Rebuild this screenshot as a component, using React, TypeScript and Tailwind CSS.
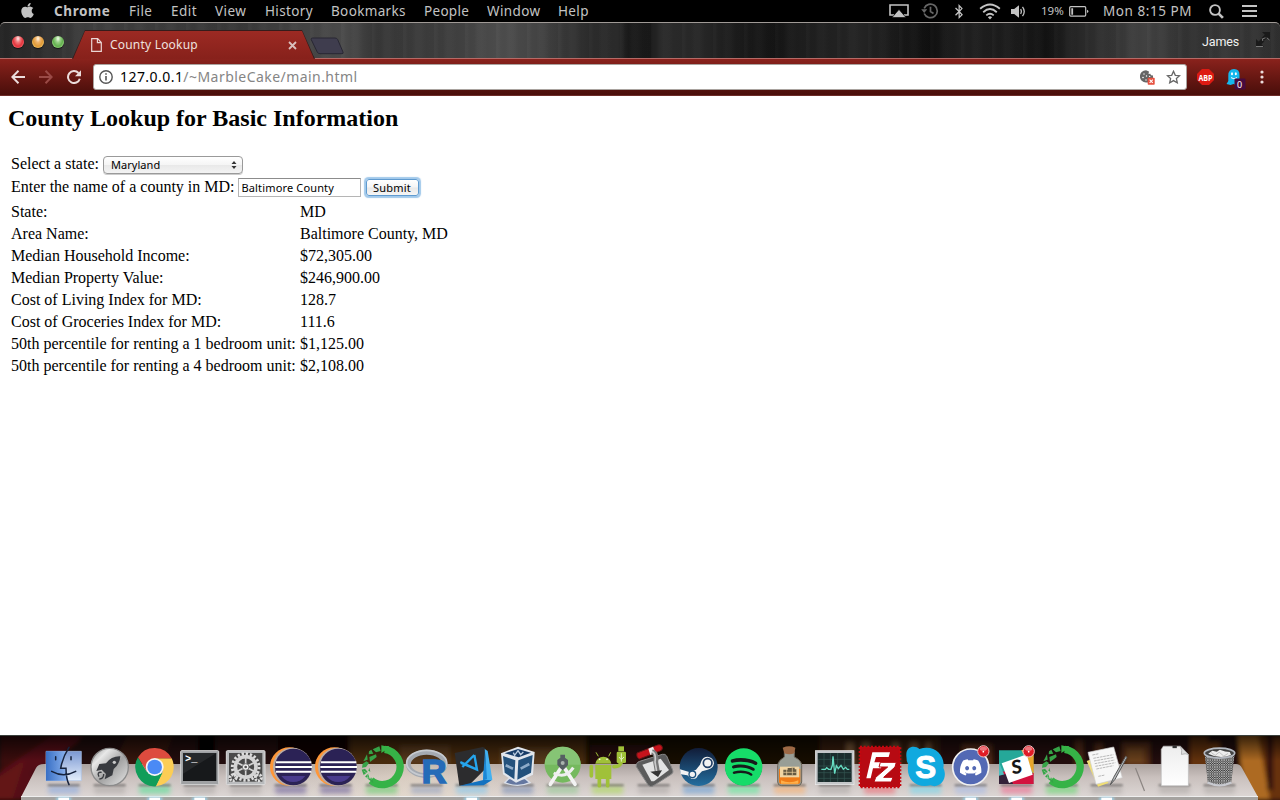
import type { ReactNode } from 'react';
import { FaApple, FaBluetoothB, FaSpotify } from 'react-icons/fa';
import { FaDiscord } from 'react-icons/fa6';

const ui = 'font-["Noto_Sans","Liberation_Sans",sans-serif]';

const menus: { label: string; cls: string }[] = [
  { label: 'Chrome', cls: 'w-[75px] font-bold tracking-[0.6px]' },
  { label: 'File', cls: 'w-[42px] tracking-[0.45px]' },
  { label: 'Edit', cls: 'w-[44px] tracking-[0.45px]' },
  { label: 'View', cls: 'w-[50px] tracking-[0.45px]' },
  { label: 'History', cls: 'w-[66px] tracking-[0.35px]' },
  { label: 'Bookmarks', cls: 'w-[93px] tracking-[0.35px]' },
  { label: 'People', cls: 'w-[63px] tracking-[0.3px]' },
  { label: 'Window', cls: 'w-[71px] tracking-[0.4px]' },
  { label: 'Help', cls: 'w-[40px] tracking-[0.35px]' },
];

function MenuBar() {
  return (
    <header className={`${ui} flex h-[22px] shrink-0 items-center bg-black text-[13.5px] leading-[22px] text-[#c3c3c3]`}>
      <FaApple className="ml-[19px] mb-[2px] mr-[18px] h-[17px] w-[17px] shrink-0" />
      <nav className="flex">
        {menus.map((m) => (
          <span key={m.label} className={`${m.cls} shrink-0 whitespace-nowrap`}>{m.label}</span>
        ))}
      </nav>
      <div className="ml-auto flex h-[22px] w-[391px] shrink-0 items-center">
        <svg className="w-[20px] h-[14px] shrink-0" viewBox="0 0 20 14" fill="none">
          <path d="M5 11H1V1h18v10h-4" stroke="#c3c3c3" strokeWidth="1.6" />
          <path d="M10 5.5 17 13.5H3Z" fill="#c3c3c3" stroke="#000" strokeWidth=".6" />
        </svg>
        <svg className="ml-[12px] w-[18px] h-[16px] shrink-0" viewBox="0 0 18 16" fill="none" stroke="#676767" strokeWidth="1.7">
          <path d="M3.2 10.5A6.8 6.8 0 1 0 3.2 5.3M9.5 3.8v4.7l3 2" />
          <path d="M.2 6.2h6L3.2 10Z" fill="#676767" stroke="none" />
        </svg>
        <FaBluetoothB className="ml-[15px] h-[15px] w-[10px] shrink-0" />
        <svg className="ml-[15px] w-[22px] h-[17px] shrink-0" viewBox="0 0 23 17" preserveAspectRatio="none" fill="none" stroke="#c3c3c3" strokeWidth="1.9">
          <path d="M1.2 5.8Q11.5-3 21.8 5.8M4.4 9.2Q11.5 3 18.6 9.2M7.6 12.4Q11.5 9 15.4 12.4" />
          <path d="m11.5 16.4-2.2-2.2q2.2-1.7 4.4 0Z" fill="#c3c3c3" stroke="none" />
        </svg>
        <svg className="ml-[10px] w-[15px] h-[13px] shrink-0" viewBox="0 0 15 13" fill="none" stroke="#c3c3c3" strokeWidth="1.3">
          <path d="M0 4h3.2L8 .3v12.4L3.2 9H0Z" fill="#c3c3c3" stroke="none" />
          <path d="M9.6 4.1q1.5 2.4 0 4.8M11.5 1.9q3.5 4.6 0 9.2" />
        </svg>
        <span className="ml-[15px] w-[28px] shrink-0 text-[11.5px]">19%</span>
        <svg className="w-[20px] h-[11px] shrink-0" viewBox="0 0 20 11" fill="none">
          <rect x=".7" y=".7" width="16" height="9.4" rx="1" stroke="#c3c3c3" strokeWidth="1.2" />
          <path d="M2.3 2.2h1.8v6.5H2.3ZM18 3.7q3 1.7 0 3.4Z" fill="#c3c3c3" />
        </svg>
        <span className="ml-[14px] w-[106px] shrink-0 whitespace-nowrap tracking-[0.55px]">Mon 8:15 PM</span>
        <svg className="w-[15px] h-[15px] shrink-0" viewBox="0 0 15 15" fill="none" stroke="#c3c3c3">
          <circle cx="6" cy="6" r="4.9" strokeWidth="1.9" />
          <path d="m9.6 9.6 4.3 4.3" strokeWidth="2.7" />
        </svg>
        <svg className="ml-[18px] w-[15px] h-[12px] shrink-0" viewBox="0 0 15 12" fill="#c3c3c3">
          <path d="M0 0h15v2H0ZM0 5h15v2H0ZM0 10h15v2H0Z" />
        </svg>
      </div>
    </header>
  );
}

function TabStrip() {
  return (
    <div className="flex h-[36px] shrink-0 rounded-t-[5px] border-t border-[#a09a96] bg-[repeating-linear-gradient(90deg,#ffffff04_0_2px,#00000008_5px_9px,#ffffff04_13px_17px,#00000008_23px_31px),linear-gradient(90deg,#252525_0,#303030_45px,#404040_90px,#393939_240px,#444_300px,#4c4c4c_345px,#383838_375px,#3f3f3f_450px,#4e4e4e_500px,#464646_535px,#2c2c2c_590px,#2b2b2b_618px,#1b1b1b_628px,#191919_651px,#2b2b2b_660px,#282828_700px,#1c1c1c_735px,#151515_775px,#1e1e1e_800px,#252525_860px,#191919_900px,#101010_930px,#202020_960px,#1b1b1b_1020px,#121212_1045px,#292929_1080px,#363636_1115px,#434343_1145px,#323232_1190px,#383838_1230px,#303030_1280px)]">
      <div className="ml-[12px] mt-[13px] flex gap-[8px]">
        <i className="h-[12px] w-[12px] rounded-full bg-[radial-gradient(ellipse_at_50%_22%,#fbd5d5_0_6%,#f07a7c_28%,#e4333b_58%,#ff9a9e_98%)] shadow-[0_1px_1px_#0009]" />
        <i className="h-[12px] w-[12px] rounded-full bg-[radial-gradient(ellipse_at_50%_22%,#fdebd0_0_6%,#f0b56e_28%,#e09a35_58%,#ffe99a_98%)] shadow-[0_1px_1px_#0009]" />
        <i className="h-[12px] w-[12px] rounded-full bg-[radial-gradient(ellipse_at_50%_22%,#e0f5d8_0_6%,#98cf86_28%,#62b04d_58%,#cdf9b2_98%)] shadow-[0_1px_1px_#0009]" />
      </div>
      <div className="ml-[8px] mt-[7px] h-[29px] w-[244px] shrink-0 bg-[#351c1b] [clip-path:polygon(0_100%,13px_0,230px_0,243px_100%)]">
        <div className={`${ui} mt-px ml-px flex h-[28px] w-[242px] items-center bg-linear-to-b from-[#9c2a23] to-[#87211b] text-[12px] text-[#efe1df] [clip-path:polygon(0_100%,12px_0,229px_0,241px_100%)]`}>
          <svg className="ml-[18px] w-[11px] h-[14px] shrink-0" viewBox="0 0 11 14" fill="none" stroke="#ead6d4" strokeWidth="1.2">
            <path d="M.7.7h6l3.6 3.8v8.8H.7ZM6.4.7v4h3.9" />
          </svg>
          <span className="ml-[8px] w-[178px] whitespace-nowrap tracking-[0.2px]">County Lookup</span>
          <svg className="w-[9px] h-[9px] shrink-0" viewBox="0 0 9 9" stroke="#d9bfbc" strokeWidth="1.8"><path d="m1 1 7 7M8 1 1 8" /></svg>
        </div>
      </div>
      <svg className="-ml-[6px] mt-[14px] w-[35px] h-[18px] shrink-0" viewBox="0 0 35 18">
        <path d="M2.5 1H25q2 0 2.7 1.6L33 15q.7 1.7-1 1.7H10q-2 0-2.7-1.6L1.2 2.5Q.8 1 2.5 1Z" fill="#3f3d4e" stroke="#282733" />
      </svg>
      <span className='ml-auto mt-[11px] w-[54px] font-["Roboto",sans-serif] text-[12.5px] leading-[16px] tracking-[-0.15px] text-[#f0f0f0]'>James</span>
      <svg className="mr-[10px] mt-[9px] w-[14px] h-[16px] shrink-0" viewBox="0 0 14 16" fill="none">
        <path d="M6 0h8v8l-2.500-2.600-3 3-2.700-2.700 3-3ZM0 15V7l2.600 2.500 2.800-2.800 2.800 2.800-2.800 2.800L8 15Z" fill="#1a1a1a" />
        <path d="M0 14.500h7M6.500 8.800v-2l3-1M10.800 5.800 13.500 8" stroke="#777" />
      </svg>
    </div>
  );
}

function Toolbar() {
  return (
    <div className={`${ui} flex h-[38px] shrink-0 items-start border-y border-t-[#b56a66] border-b-[#6e2c28] bg-linear-to-b from-[#8a221c] to-[#490e0a]`}>
      <svg className="ml-[11px] mt-[11px] w-[14px] h-[14px] shrink-0" viewBox="0 0 14 14" fill="none" stroke="#ecdddc" strokeWidth="2"><path d="M14 7H1.5M7.5.8 1.3 7l6.2 6.2" /></svg>
      <svg className="ml-[14px] mt-[11px] w-[14px] h-[14px] shrink-0" viewBox="0 0 14 14" fill="none" stroke="#9a4a46" strokeWidth="2"><path d="M0 7h12.5M6.5.8 12.7 7l-6.2 6.2" /></svg>
      <svg className="ml-[14px] mt-[11px] w-[14px] h-[14px] shrink-0" viewBox="0 0 14 14" fill="none" stroke="#ecdddc" strokeWidth="2"><path d="M12.8 8.7A6 6 0 1 1 11.5 3" /><path d="M14 .3v6H8Z" fill="#ecdddc" stroke="none" /></svg>
      <div className="ml-[12px] mt-[5px] flex h-[26px] w-[1094px] shrink-0 items-center rounded-[3px] border border-[#a9a39f] bg-white">
        <svg className="ml-[5px] w-[14px] h-[14px] shrink-0" viewBox="0 0 14 14" fill="none" stroke="#555"><circle cx="7" cy="7" r="6.2" strokeWidth="1.4" /><path d="M7 6v4.6M7 3.2v1.600" strokeWidth="1.6" /></svg>
        <span className="ml-[7px] whitespace-nowrap text-[14px] leading-[20px] tracking-[0.45px] text-[#858585]"><span className="text-black">127.0.0.1</span>/~MarbleCake/main.html</span>
        <svg className="ml-auto w-[15px] h-[15px] shrink-0" viewBox="0 0 15 15">
          <path d="M6 .3a6 6 0 0 0 0 12.200h2V8h5V5.500l-2-.2-.7-1.500-1.800.2L9 1.500Z" fill="#666" />
          <g fill="#fff"><circle cx="4" cy="4" r=".7" /><circle cx="3" cy="7.500" r=".8" /><circle cx="6" cy="10" r=".7" /><circle cx="6.500" cy="6" r=".7" /><circle cx="9.700" cy="6.400" r=".7" /></g>
          <rect x="7.700" y="7.700" width="7" height="7" rx=".7" fill="#e6503f" /><path d="m9.600 9.600 3.200 3.200m0-3.200-3.200 3.200" stroke="#fff" strokeWidth="1.1" />
        </svg>
        <svg className="ml-[11px] mr-[5px] w-[15px] h-[14px] shrink-0" viewBox="0 0 15 14" fill="none" stroke="#666" strokeWidth="1.3"><path d="m7.500 1.300 1.800 4 4.300.4-3.200 2.900.9 4.200-3.800-2.200-3.800 2.200.9-4.200L1.400 5.700l4.300-.4Z" /></svg>
      </div>
      <svg className="ml-[10px] mt-[10px] w-[17px] h-[16px] shrink-0" viewBox="0 0 17 16">
        <path d="M5 0h7l5 5v6l-5 5H5l-5-5V5Z" fill="#dd1a12" />
        <text x="8.500" y="11.500" textAnchor="middle" textLength="14" lengthAdjust="spacingAndGlyphs" fontFamily="Open Sans, sans-serif" fontSize="9" fontWeight="700" fill="#fff">ABP</text>
      </svg>
      <svg className="ml-[12px] mt-[10px] w-[20px] h-[21px] shrink-0" viewBox="0 0 20 21">
        <path d="M2.300 6.500Q2.300 0 8 0t5.500 6v5l1.500 4-3-1-2 2-2.500-1-3 1-4-1 1.800-3Z" fill="#15b8ee" />
        <ellipse cx="6" cy="4.800" rx="1" ry="1.500" fill="#fff" /><ellipse cx="9.800" cy="4.800" rx="1" ry="1.500" fill="#fff" /><path d="M5 8.600q3 2.500 6 0" stroke="#fff" fill="none" />
        <rect x="8.500" y="9.500" width="11" height="11" rx="1" fill="#470a3e" />
        <text x="13.500" y="18.500" textAnchor="middle" fontFamily="Noto Sans, sans-serif" fontSize="9" fill="#fff">0</text>
      </svg>
      <svg className="ml-[14px] mt-[11px] w-[4px] h-[14px] shrink-0" viewBox="0 0 4 14" fill="#ecdddc"><circle cx="2" cy="2" r="1.600" /><circle cx="2" cy="7" r="1.600" /><circle cx="2" cy="12" r="1.600" /></svg>
    </div>
  );
}

const rows = [
  ['State:', 'MD'],
  ['Area Name:', 'Baltimore County, MD'],
  ['Median Household Income:', '$72,305.00'],
  ['Median Property Value:', '$246,900.00'],
  ['Cost of Living Index for MD:', '128.7'],
  ['Cost of Groceries Index for MD:', '111.6'],
  ['50th percentile for renting a 1 bedroom unit:', '$1,125.00'],
  ['50th percentile for renting a 4 bedroom unit:', '$2,108.00'],
];

function Page() {
  return (
    <main className='min-h-0 flex-1 overflow-hidden bg-white font-["Liberation_Serif","Times_New_Roman",serif] text-[16px] leading-[18px] text-black'>
      <h2 className="ml-[8px] mt-[8px] text-[24px] leading-[28px] font-bold">County Lookup for Basic Information</h2>
      <div className="ml-[11px] mt-[21px] flex h-[22px] items-center">
        <span>Select a state:</span>
        <div className={`${ui} ml-[4px] mt-[2px] flex h-[18px] w-[140px] items-center rounded-[4px] border border-[#9a9a9a] bg-[linear-gradient(#fff,#f5f5f5_48%,#e9e9e9_52%,#f3f3f3)] pl-[7px] pr-[5px] text-[11px] tracking-[0.05px] shadow-[0_1px_0_#ccc]`}>
          <span>Maryland</span>
          <svg className="ml-auto w-[6px] h-[8px]" viewBox="0 0 6 8" fill="#333"><path d="M3 0 5.500 3h-5ZM3 8 .5 5h5Z" /></svg>
        </div>
      </div>
      <div className="ml-[11px] mt-[1px] flex h-[23px] items-center">
        <span className="mb-px">Enter the name of a county in MD:</span>
        <input className={`${ui} ml-[3px] h-[19px] w-[123px] border border-[#b5b5b5] border-t-[#8c8c8c] bg-white pl-[3px] pr-px text-[11px] tracking-[0.15px] outline-none`} defaultValue="Baltimore County" />
        <button className={`${ui} ml-[5px] h-[17px] w-[53px] rounded-[3px] border border-[#5f9bd0] bg-[linear-gradient(#fff,#f5f5f5_48%,#e9e9e9_52%,#f5f5f5)] text-[11px] leading-[15px] tracking-[0.2px] shadow-[0_0_1px_1.5px_#77afe0b0]`}>Submit</button>
      </div>
      <table className="ml-[8px] mt-[1px] border-separate border-spacing-[2px]">
        <tbody>
          {rows.map(([k, v]) => (
            <tr key={k}>
              <td className="w-[287px] whitespace-nowrap p-px">{k}</td>
              <td className="whitespace-nowrap p-px">{v}</td>
            </tr>
          ))}
        </tbody>
      </table>
    </main>
  );
}

/* Dock icons share one drawing grid: 3 units per pixel, centred on the icon. */
function DockItem({ children, running = false, glow = '#a9a4a2', doc = false }: { children: ReactNode; running?: boolean; glow?: string; doc?: boolean }) {
  return (
    <svg className={doc ? 'h-[65px] w-[45px] shrink-0 overflow-visible' : 'h-[65px] w-[45.35px] shrink-0 overflow-visible'} viewBox="-68 -96 136 195">
      <rect x="-46" y="58" width="92" height="22" fill={glow} opacity=".55" filter="url(#soft)" />
      <path d="M-48 52H48V58H-48Z" fill="#0006" filter="url(#softer)" />
      {children}
      {running && <><ellipse cx="0" cy="96" rx="24" ry="5" fill="#9ee0ff" filter="url(#softer)" /><rect x="-16" y="92" width="32" height="7" fill="#fff" /></>}
    </svg>
  );
}

function Eclipse() {
  return <><circle cx="-4" cy="-1" r="58" fill="#ff9638" /><circle cx="5" cy="0" r="58" fill="#b9aca6" /><circle cx="8" cy="0" r="55" fill="#2b2255" /><path d="M-28 27a45 45 0 0 0 72 0Z" fill="#493b8d" /><path d="M-44-14H62M-46 0H64M-44 14H62" stroke="#fff" strokeWidth="6" /></>;
}

function Ring() {
  return (
    <g transform="translate(3 0)">
      <path d="M6-53A53 53 0 1 1-35 40" fill="none" stroke="#36b347" strokeWidth="22" />
      <path d="m-4-65 10 2 14 0-10 12-14 9Z" fill="#36b347" />
      <g fill="#36a347">
        <path d="m-10-62 4 14-14 4-10-9ZM-34-52l6 12-14 2 1-9ZM-20-38l2 8-20 15-2-15ZM-47-38l2 16-13 5ZM-60-10l11-7 8 5-9 12-12 2ZM-63 8l10-3 8 10-12 9ZM-40 2l3 12-6-3ZM-53 29l10-10 3 14 8-1 4 16Z" />
      </g>
      <path d="m-54 30 22 6M-42 12l-6 34M-37 26l-20-14" stroke="#c7e2c4" strokeWidth="2" opacity=".7" />
    </g>
  );
}

function Badge({ x }: { x: number }) {
  return <><circle cx={x} cy="-47" r="17" fill="#e01c26" stroke="#ecc5c5" strokeWidth="3" /><ellipse cx={x} cy="-55" rx="11" ry="6" fill="#fff" opacity=".4" /><circle cx={x} cy="-46" r="2.500" fill="#fff" /></>;
}

/* Blurred theatre-like wallpaper behind the dock, with the glass shelf on top. */
function Shelf() {
  return (
    <svg className="absolute -top-px left-0 h-[65px] w-[1280px]" viewBox="0 735 1280 65">
      <defs>
        <linearGradient id="shelf" x2="0" y2="1"><stop stopColor="#aaa19e" /><stop offset=".4" stopColor="#c9c0bd" /><stop offset="1" stopColor="#ddd7d5" /></linearGradient>
        <linearGradient id="shade" x2="0" y2="1"><stop stopOpacity=".7" /><stop offset=".4" stopOpacity="0" /></linearGradient>
        <linearGradient id="warm" x2="1" y2="0"><stop offset=".2" stopColor="#e9dac5" stopOpacity="0" /><stop offset=".32" stopColor="#e9dac5" stopOpacity=".5" /><stop offset=".43" stopColor="#e9dac5" stopOpacity="0" /></linearGradient>
        <filter id="wall" x="-5%" y="-50%" width="110%" height="200%"><feGaussianBlur stdDeviation="2" /></filter>
        <filter id="soft" x="-30%" y="-80%" width="160%" height="260%"><feGaussianBlur stdDeviation="8" /></filter>
        <filter id="softer" x="-30%" y="-200%" width="160%" height="500%"><feGaussianBlur stdDeviation="3" /></filter>
      </defs>
      <g filter="url(#wall)">
        <path d="M0 730H110V800H0Z" fill="#3b0b0c" />
        <path d="M-5 775 60 730H100L20 800H-5Z" fill="#541113" /><path d="M-5 780 25 760 12 800H-5Z" fill="#631517" />
        <path d="M30 775 95 730H110L60 770Z" fill="#230708" />
        <path d="M85 730H350V770H60Z" fill="#220e08" /><path d="M130 730H175L160 770H110Z" fill="#34160b" /><path d="M198 730H215V770H198Z" fill="#050202" /><path d="M278 730H348V770H278Z" fill="#0d0303" />
        <path d="M350 730H586V770H350Z" fill="#472c11" /><path d="M400 745H450V765H400ZM500 748H560V768H500Z" fill="#56381a" />
        <path d="M586 730H830V770H586Z" fill="#190706" /><path d="M590 745h60v25h-60Z" fill="#270c09" />
        <path d="M820 730H940V770H820Z" fill="#341a0e" />
        <path d="M846 742h8v28h-8ZM862 742h8v28h-8ZM892 742h7v28h-7ZM910 742h8v28h-8ZM926 742h5v28h-5Z" fill="#705031" />
        <path d="M940 730H1290V770H940Z" fill="#210c07" />
        <path d="M962 744h30v25h-30ZM1075 740h8v30h-8ZM1095 743h8v27h-8ZM1122 742h28v28h-28Z" fill="#512b15" /><path d="M1127 748h17v16h-17Z" fill="#69411f" />
        <path d="M1190 735h18v34h-18ZM1208 742h12v27h-12Z" fill="#64300e" />
        <path d="M1237 730H1262L1270 800H1245Z" fill="#ad6a20" /><path d="M1258 735H1290V800H1270Z" fill="#67300e" /><path d="M1267 735H1273V790H1267Z" fill="#2d0f07" />
      </g>
      <path d="M0 735H1280V800H0Z" fill="url(#shade)" />
      <path d="M44 764H1236q4 0 6 4L1258 797H21L36 768q2-4 8-4Z" fill="url(#shelf)" />
      <path d="M44 764H1236q4 0 6 4L1258 797H21L36 768q2-4 8-4Z" fill="url(#warm)" />
      <path d="M21 797H1258V800H21Z" fill="#a5a3a0" /><path d="M21 796.500H1258" stroke="#efefef" />
      <path d="m1135.500 768 9 23" stroke="#8b8582" strokeWidth="1.200" />
    </svg>
  );
}

function Dock() {
  return (
    <footer className="relative h-[65px] shrink-0 overflow-hidden border-t border-[#3a403c] bg-[#1a0806]">
      <Shelf />
      <div className="relative -mt-px flex h-[65px] pl-[41.300px]">
        <DockItem running glow="#7fa5e5">
          <defs><linearGradient id="fa"><stop stopColor="#386fc5" /><stop offset="1" stopColor="#8db3ee" /></linearGradient><linearGradient id="fb" x2="0" y2="1"><stop stopColor="#7b98d2" /><stop offset="1" stopColor="#e4eefb" /></linearGradient></defs>
          <path d="M-53-47H53V41H-53Z" fill="url(#fb)" stroke="#aac2e9" strokeWidth="2" /><path d="M-53-47H6L-9 4H7L10 41H-53Z" fill="url(#fa)" />
          <path d="M16-59Q-3-30-9 4H7Q7 35 16 53M-36 13Q0 33 36 13M-24-31v9M22-31v9" fill="none" stroke="#17233d" strokeWidth="4.500" strokeLinecap="round" />
        </DockItem>
        <DockItem>
          <defs><linearGradient id="silver" x2="1" y2="1"><stop stopColor="#888" /><stop offset=".25" stopColor="#e8e8e8" /><stop offset=".55" stopColor="#a2a2a2" /><stop offset="1" stopColor="#e9e9e9" /></linearGradient></defs>
          <circle r="56" fill="url(#silver)" stroke="#8b8b8b" strokeWidth="4" />
          <path d="M32-32Q5-33-11-11L-31-9-40 12-24 8-11 21-15 37 8 25 12 6Q31-10 32-32Z" fill="#393b40" /><circle cx="14" cy="-14" r="5" fill="#c8c8c8" /><path d="M-24 16Q-40 14-32 29M-18 21q0 15-13 15" stroke="#393b40" strokeWidth="4" fill="none" />
        </DockItem>
        <DockItem running glow="#43e38d">
          <path d="M-50-29A58 58 0 0 0 4 58L25 17 0 26-24 14Z" fill="#109d59" /><path d="M0-26H51a58 58 0 0 1-47 84L25 14Z" fill="#fccd55" /><path d="M-50-29A58 58 0 0 1 51-26H0L-24 12Z" fill="#dd4b3e" /><circle r="27" fill="#f5f5f5" /><circle r="22" fill="#4a8af5" />
        </DockItem>
        <DockItem running>
          <rect x="-57" y="-49" width="114" height="102" rx="3" fill="#9fa1a3" stroke="#d5d5d5" strokeWidth="3" /><rect x="-50" y="-42" width="100" height="84" fill="#17191b" /><path d="M-50-42H50L-50 20Z" fill="#3a3c3e" opacity=".45" />
          <text x="-44" y="-16" fontFamily="Liberation Mono, monospace" fontSize="31" fontWeight="700" fill="#fff">&gt;_</text>
        </DockItem>
        <DockItem>
          <rect x="-58" y="-49" width="116" height="102" rx="3" fill="#b9bbbd" stroke="#ddd" strokeWidth="3" /><rect x="-50" y="-42" width="100" height="86" fill="#4a4a4a" />
          <circle r="40" fill="none" stroke="#dedede" strokeWidth="9" strokeDasharray="7 5.500" /><circle r="31" fill="none" stroke="#d4d4d4" strokeWidth="11" /><path d="M0-28V28M-25-13 25 13M25-13-25 13" stroke="#d4d4d4" strokeWidth="5" /><circle r="10" fill="#eee" stroke="#777" strokeWidth="3" /><circle r="4" fill="#555" /><circle cx="-38" cy="32" r="9" fill="none" stroke="#ddd" strokeWidth="9" strokeDasharray="6 3" /><circle cx="38" cy="32" r="9" fill="none" stroke="#ddd" strokeWidth="9" strokeDasharray="6 3" />
        </DockItem>
        <DockItem glow="#625496"><Eclipse /></DockItem>
        <DockItem glow="#625496"><Eclipse /></DockItem>
        <DockItem glow="#55cc61"><Ring /></DockItem>
        <DockItem glow="#8b9cc0">
          <ellipse cx="0" cy="-9" rx="55" ry="35" fill="none" stroke="#a4a9b1" strokeWidth="15" /><ellipse cx="0" cy="-12" rx="60" ry="38" fill="none" stroke="#c6cad0" strokeWidth="5" />
          <text x="-15" y="49" fontFamily="Liberation Sans, sans-serif" fontSize="100" fontWeight="700" fill="#256bb8" stroke="#256bb8" strokeWidth="5" textLength="74" lengthAdjust="spacingAndGlyphs">R</text>
        </DockItem>
        <DockItem running glow="#79c7f4">
          <path d="M36-56 48-48 62 38 34 53Z" fill="#42b0f0" /><path d="m-51-42 84-18 6 2 4 62L-5 52-37 56Z" fill="#2c2c2e" /><path d="M-36 56 38 38 60 40 36 55Z" fill="#1272c0" /><path d="M40-50 46 36 34 40Z" fill="#1c87d5" />
          <path d="M8-36 16 8-32-12M8-36-28 0M16 8-34-15" stroke="#25a5ee" strokeWidth="7" fill="none" />
        </DockItem>
        <DockItem glow="#6d86b5">
          <g transform="translate(1 0)"><path d="M-28 35h50l14 12q-37 16-76 0Z" fill="#6477a0" stroke="#d9dfe9" strokeWidth="4" /><path d="M0-61 50-45 45 23-6 47-45 22-51-41Z" fill="#e1e6ed" /><path d="m0-54 39 11-37 14-42-12Z" fill="#183c67" /><path d="M-45-33-8-20-11 37-40 17ZM1-20 44-36 39 17-2 38Z" fill="#23517c" /><path d="m-14-43 4 8 10-14 8 12 8-8" stroke="#bccde0" strokeWidth="4" fill="none" /><path d="m-37-5 22 10M8 5 34-9" stroke="#8dabc9" strokeWidth="8" /></g>
        </DockItem>
        <DockItem glow="#8bc98b">
          <circle cy="-7" r="54" fill="#75b95e" /><path d="M-54-7A54 54 0 0 1 54-7Z" fill="#86c475" /><path d="M-5 2-37 52M5 2 37 52" stroke="#f3f3f3" strokeWidth="11" strokeLinecap="round" /><path d="M-27 18Q8 37 32 2" stroke="#eee" strokeWidth="9" fill="none" /><path d="M-7-37H7v9l9 7v15L7 4 0 10-7 4l-9-10v-15l9-7Z" fill="#555e62" /><circle cy="-12" r="6" fill="#a9b3ae" />
        </DockItem>
        <DockItem glow="#a6dc4a">
          <g fill="#a0c139"><path d="M-37-10a25 29 0 0 1 48 0ZM-37-6H11V36H-37Z" /><path d="M-25 32v24M0 32v24M-49-1v28M19-1Q36 0 42-16" stroke="#a0c139" strokeWidth="11" strokeLinecap="round" fill="none" /><rect x="27" y="-46" width="28" height="34" rx="4" /><rect x="32" y="-62" width="17" height="15" /></g><path d="m-28-32-7-12M3-32l6-12" stroke="#a0c139" strokeWidth="3" /><g fill="#fff"><circle cx="-24" cy="-23" r="2.500" /><circle cx="-2" cy="-23" r="2.500" /></g><path d="M41-16v-25m-7 11 7 8 8-8" stroke="#e5efc9" strokeWidth="3" fill="none" />
        </DockItem>
        <DockItem>
          <path d="m-42-17 68-21q9-2 13 5L57 9q3 7-3 12L-2 57q-7 4-14-2L-52-1Q-54-13-42-17Z" fill="#5b5b5b" stroke="#888" strokeWidth="3" /><path d="m-34-7 55-18 25 34-45 34-8 0Z" fill="#e3e3e3" /><path d="m-50-42 62-24q12-3 14 7 2 8-7 11L-43-24q-10-5-7-18Z" fill="#c5131c" stroke="#6a1515" strokeWidth="3" /><path d="m-16-55 14-6 8 18-16 7Z" fill="#ececec" /><path d="M-5-46Q10-42 6-15L11 14" stroke="#777" strokeWidth="15" fill="none" /><path d="M-5-46Q8-42 4-15L9 14" stroke="#ccc" strokeWidth="5" fill="none" /><path d="m-10 14 35-4-12 20Z" fill="#333" />
        </DockItem>
        <DockItem glow="#5a99d9">
          <defs><linearGradient id="steam" x2="0" y2="1"><stop stopColor="#111c38" /><stop offset="1" stopColor="#236e9f" /></linearGradient></defs>
          <circle r="57" fill="url(#steam)" /><path d="M-56 7-26 16-8 8 4-7 7-15Q12-31 27-31 44-29 46-11 44 5 27 8L10 13-3 26Q-7 38-22 35L-34 25-54 22Z" fill="#f2f2f2" /><circle cx="27" cy="-12" r="13" fill="#f2f2f2" stroke="#223f66" strokeWidth="5" /><circle cx="-19" cy="22" r="10" fill="#f2f2f2" stroke="#1c527e" strokeWidth="4" />
        </DockItem>
        <DockItem glow="#4ef195"><circle r="55" fill="#17191b" /><FaSpotify x="-58" y="-58" size="116" color="#16dc69" /></DockItem>
        <DockItem glow="#ffad63">
          <path d="M-16-46h30v16q22 10 22 26V45Q34 56 25 56H-24Q-36 56-36 45V-4Q-35-20-16-30Z" fill="#989e96" stroke="#6d6558" strokeWidth="3" /><path d="M-32 6Q0-4 32 6V43q0 9-10 9H-22q-10 0-10-9Z" fill="#ef7c18" /><path d="M-26 40q25 12 52 0v10h-52Z" fill="#ffb04a" /><path d="M-21-58q20-8 38 0l-3 17q-15 6-30 0Z" fill="#9d6945" /><path d="M-29-1H29V31H-29Z" fill="#f1d5a3" /><path d="M-19 8H-6V3H5V2H15V7H20V25H-19Z" fill="#665a42" /><path d="M-19 16h39M-9 5v20M8 2v22" stroke="#f1d5a3" strokeWidth="2" />
        </DockItem>
        <DockItem>
          <rect x="-58" y="-49" width="116" height="102" fill="#c4c7c9" stroke="#eee" strokeWidth="2" /><rect x="-51" y="-42" width="102" height="87" fill="#1b2d2d" /><path d="M-49-23H50M-49-3H50M-49 17H50M-49 34H50M-32-42V45M-13-42V45M9-42V45M29-42V45" stroke="#345753" strokeWidth="2" /><path d="M-40 7h12l4-5 6 5h7l4-12 2-27 5 52 5-24 6 9 8-10 7 12 7-6 5 6h6" stroke="#67ddc3" strokeWidth="4" fill="none" />
        </DockItem>
        <DockItem glow="#f35b67">
          <rect x="-59" y="-60" width="120" height="120" fill="#b70a12" stroke="#c4070f" strokeWidth="8" strokeDasharray="6 5" /><path d="M-40 34-22-44H31l-4 14H-11l-5 16H9L4 4H-20l-7 30Z" fill="#fff" /><path d="M2-14H50L46 0 12 31H40l-5 14H-17l5-14L24 0H-2Z" fill="#fff" stroke="#b70a12" strokeWidth="3" />
        </DockItem>
        <DockItem glow="#68d9f2">
          <path d="M-58-34C-60-64-31-66-19-54 25-70 60-35 53 3 68 33 44 67 14 55-29 66-61 34-52-8Q-58-17-58-34Z" fill="#10a9df" /><text x="0" y="34" textAnchor="middle" fontFamily="Liberation Sans, sans-serif" fontWeight="700" fontSize="94" fill="#fff" stroke="#fff" strokeWidth="3">S</text>
        </DockItem>
        <DockItem running glow="#a1b9ec"><circle r="54" fill="#5369b4" stroke="#f1f1f1" strokeWidth="5" /><FaDiscord x="-35" y="-34" size="70" color="#fff" /><Badge x={38} /></DockItem>
        <DockItem running glow="#f35f89">
          <path d="M-53-50H50V51H-53Z" fill="#25a899" /><path d="M14-51H51V24Z" fill="#e8a52c" /><path d="m-53 13 32 38h72V18Z" fill="#d3123e" /><path d="M-53-14-38 22-46 51H-53Z" fill="#4fbdbd" /><path d="m-53 26 30-7 12 32H-53Z" fill="#342139" /><path d="m-45-11 75-27 18 61-71 25Z" fill="#fff" /><text x="0" y="20" textAnchor="middle" transform="rotate(-5)" fontFamily="Lato, sans-serif" fontWeight="900" fontSize="57" fill="#171717">S</text><Badge x={36} />
        </DockItem>
        <DockItem glow="#52dc60"><Ring /></DockItem>
        <DockItem running>
          <path d="M-60-18-21-32 5 48-26 59Z" fill="#f2df72" /><path d="m-56-44 77-16 26 92-79 20Z" fill="#f7f7f7" stroke="#ccc" strokeWidth="2" /><path d="m-43-36 20-4M-40-26l60-11M-38-18l60-11M-36-10 24-21M-34-2 26-13M-31 6 20-4M-25 28l20-4" stroke="#999" strokeWidth="2" strokeDasharray="8 2" /><path d="m57-32-36 63-10 22 14-16L61-29Z" fill="#b9bdc1" stroke="#555" strokeWidth="3" />
        </DockItem>
        <div className="ml-[22px] flex">
          <DockItem doc><defs><linearGradient id="paper" x2="0" y2="1"><stop stopColor="#ededed" /><stop offset="1" stopColor="#fff" /></linearGradient></defs><path d="M-40-53-34-63H18L42-38V57H-40Z" fill="url(#paper)" stroke="#bababa" strokeWidth="2" /><path d="M18-62q6 12 3 24 12-4 21 0Z" fill="#ddd" stroke="#999" strokeWidth="2" /><path d="M-6-64H7v7H-6Z" fill="#333" /></DockItem>
          <DockItem doc>
            <defs><pattern id="mesh" width="7" height="7" patternUnits="userSpaceOnUse"><path d="M0 0 7 7M7 0 0 7" stroke="#bdbdbd" strokeWidth="2" /></pattern></defs>
            <path d="m-45-42 10 90q35 16 70 0L46-42Z" fill="#3b3b3b" /><path d="m-45-42 10 90q35 16 70 0L46-42Z" fill="url(#mesh)" /><ellipse cy="-42" rx="46" ry="15" fill="#444" stroke="#b4b8c0" strokeWidth="5" /><path d="m-34-40 12-9 14 3 9-6 16 5 14 2 4 9Q0-22-34-40Z" fill="#ededed" /><path d="m-25-44 12 9 12-10 14 12 13-8" stroke="#aaa" strokeWidth="2" fill="none" /><path d="M-36 47q36 17 72 0" stroke="#c8cad0" strokeWidth="7" fill="none" />
          </DockItem>
        </div>
      </div>
    </footer>
  );
}

export default function App() {
  return (
    <div className="flex h-[800px] w-[1280px] flex-col overflow-hidden bg-black">
      <MenuBar />
      <section className="flex min-h-0 flex-1 flex-col">
        <TabStrip />
        <Toolbar />
        <Page />
      </section>
      <Dock />
    </div>
  );
}
